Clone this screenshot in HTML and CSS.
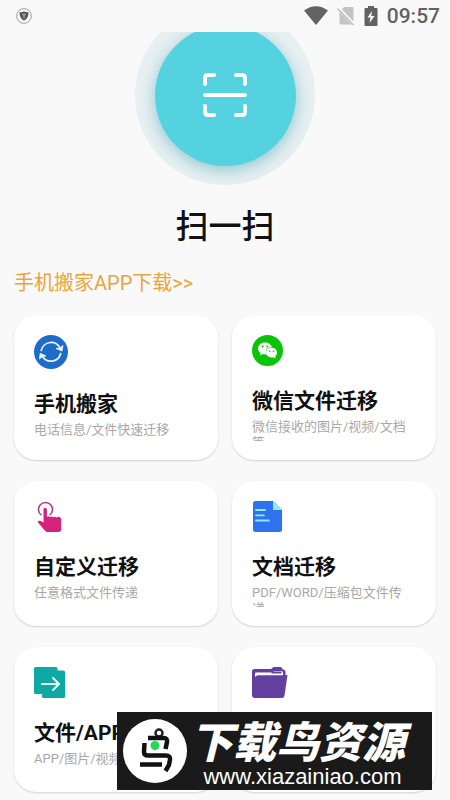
FILE: index.html
```html
<!DOCTYPE html>
<html lang="zh-CN">
<head>
<meta charset="utf-8">
<meta name="viewport" content="width=device-width, initial-scale=1">
<title>扫一扫</title>
<link rel="stylesheet" href="styles.css">
</head>
<body>
<header class="status">
  <svg class="status-shield" width="16" height="16" viewBox="0 0 16 16">
    <circle cx="8" cy="8" r="7.3" fill="#fff" stroke="#999" stroke-width="1"/>
    <path d="M8 3.2 Q10 4.4 12.5 4.2 Q12.8 10 8 12.8 Q3.200 10 3.500 4.200 Q6 4.400 8 3.200Z" fill="#555"/>
    <path d="M6.400 6.500 Q8 4.800 9.600 6.500 L8 8.200Z M8 8v2.500" fill="none" stroke="#ccc" stroke-width=".8"/>
  </svg>
  <div class="status-right">
    <svg width="24" height="20" viewBox="0 0 24 20"><path d="M0 4.500 Q12 -4 24 4.500 L12 19Z" fill="#626262"/></svg>
    <svg width="18" height="20" viewBox="0 0 18 20"><path d="M7 1h8.500q1 0 1 1v15.500q0 1-1 1H3.500q-1 0-1-1V5.500Z" fill="#c4c4c4"/><path d="M.5 1.500 17.500 19" stroke="#f9f9f9" stroke-width="3.500"/><path d="M.5 2.500 16.500 19" stroke="#bbb" stroke-width="1.500"/></svg>
    <svg width="14" height="20" viewBox="0 0 14 20"><path d="M4 0h6v2h2.500q1 0 1 1v16q0 1-1 1h-11q-1 0-1-1V3q0-1 1-1H4Z" fill="#626262"/><path d="M8 5 3.500 11.500h3L5.500 17l5-7H7.300Z" fill="#fff"/></svg>
    <span class="clock">09:57</span>
  </div>
</header>

<main class="content">
  <button class="scan" type="button" aria-labelledby="scan-title">
    <span class="scan-disc">
      <svg width="46" height="46" viewBox="0 0 46 46" fill="none" stroke="#fff" stroke-width="4" stroke-linecap="round" stroke-linejoin="round">
        <path d="M3 12V6q0-3 3-3h6M34 3h6q3 0 3 3v6M43 34v6q0 3-3 3h-6M12 43H6q-3 0-3-3v-6M3 23h40"/>
      </svg>
    </span>
  </button>
  <h1 class="scan-title" id="scan-title">扫一扫</h1>
  <a class="download" href="#">手机搬家APP下载&gt;&gt;</a>

  <nav class="grid">
    <a class="card" href="#">
      <svg width="34" height="34" viewBox="0 0 34 34">
        <circle cx="17" cy="17" r="17" fill="#1e6cc8"/>
        <g fill="none" stroke="#e8fbff" stroke-width="1.700" stroke-linecap="round"><path d="M7.300 15.500A10 10 0 0 1 26.300 13.500M26.700 18.500A10 10 0 0 1 8.500 21.500"/></g>
        <path d="M22 13.500 28 16 29 10.500 26 13Z M12 21 6.200 18.300 5.500 24 8.300 21.500Z" fill="#e8fbff" stroke="#e8fbff" stroke-width=".8" stroke-linejoin="round"/>
      </svg>
      <h2 class="card-title">手机搬家</h2>
      <p class="card-note">电话信息/文件快速迁移</p>
    </a>
    <a class="card" href="#">
      <svg width="31" height="31" viewBox="0 0 31 31">
        <circle cx="15.500" cy="15.500" r="15.500" fill="#09c409"/>
        <path d="M13 7.500C9 7.500 6 10.200 6 13.500c0 2 1 3.600 2.700 4.700L8 20.500l2.800-1.400q1.500.4 3 .3Q12.500 12.500 20 12C19 9.300 16.300 7.500 13 7.500Z" fill="#fff"/>
        <path d="M19.500 12.800c-3.200 0-5.600 2.100-5.600 4.800s2.400 4.900 5.600 4.900q1.200 0 2.200-.3l2 1.200-.5-2C24.300 20.500 25 19.200 25 17.600c0-2.700-2.300-4.800-5.500-4.800Z" fill="#fff"/>
        <g fill="#09c409"><circle cx="10.800" cy="11.500" r="1"/><circle cx="15.300" cy="11.500" r="1"/><circle cx="17.800" cy="16.300" r=".8"/><circle cx="21.400" cy="16.300" r=".8"/></g>
      </svg>
      <h2 class="card-title">微信文件迁移</h2>
      <p class="card-note">微信接收的图片/视频/文档等</p>
    </a>
    <a class="card" href="#">
      <svg width="31" height="31" viewBox="0 0 31 31">
        <path d="M7.500 14.200A7 7 0 1 1 15.500 14.200" fill="none" stroke="#b43a86" stroke-width="1.600"/>
        <path d="M9.500 8.500q0-1.700 1.700-1.700t1.700 1.700V16q1.500-1.500 3 0 2-1.200 3.300.2 2-1.200 3.300.2 2-1.400 3.500-.2 1.200.8 1.200 2.300V28q0 3-3 3H14q-2 0-3.200-1.500L4.500 22Q3.200 20 5 19.700q2.500-.2 4.500 2Z" fill="#d4227d"/>
      </svg>
      <h2 class="card-title">自定义迁移</h2>
      <p class="card-note">任意格式文件传递</p>
    </a>
    <a class="card" href="#">
      <svg width="31" height="31" viewBox="0 0 31 31">
        <path d="M3.500 0H21l9 9v19.500q0 2.500-2.500 2.500h-24Q1 31 1 28.500v-26Q1 0 3.500 0Z" fill="#2f72ed"/>
        <path d="M21 0l9 9h-9Z" fill="#8eeaff"/>
        <path d="M4 9h9M4 14.300h8M4 19.500h13" stroke="#8eeaff" stroke-width="1.800" stroke-linecap="round"/>
      </svg>
      <h2 class="card-title">文档迁移</h2>
      <p class="card-note">PDF/WORD/压缩包文件传递</p>
    </a>
    <a class="card" href="#">
      <svg width="31" height="31" viewBox="0 0 31 31">
        <path d="M1.500 0H22q1.500 0 1.500 1.500V3.500h6Q31 3.500 31 5v24.500q0 1.500-1.500 1.500H9.500Q8 31 8 29.500V27H1.500Q0 27 0 25.500v-24Q0 0 1.500 0Z" fill="#0ea9a3"/>
        <path d="M8 17h16.500M19 11l6 6-6 6" fill="none" stroke="#e5ffff" stroke-width="2" stroke-linecap="round" stroke-linejoin="round"/>
      </svg>
      <h2 class="card-title">文件/APP</h2>
      <p class="card-note">APP/图片/视频</p>
    </a>
    <a class="card" href="#">
      <svg width="36" height="31" viewBox="0 0 36 31">
        <path d="M2.500 2H19l2.500-2H29l2 2.500q2.500 0 2.500 2.500v3H35.500L32.500 28.500Q32 31 30 31H3q-3 0-3-3V4.500Q0 2 2.500 2Z" fill="#63409f"/>
        <path d="M3 10V6.500Q3 5.500 4.200 5.500H20L22.500 4H29.500q1.500 0 1.500 1.500V8.200H6Q4.200 8.200 3 10Z" fill="#fff"/>
        <path d="M21 4.500h8.500v2H19Z" fill="#63409f"/>
      </svg>
    </a>
  </nav>
</main>

<aside class="watermark">
  <svg width="64" height="64" viewBox="0 0 64 64">
    <circle cx="32" cy="32" r="32" fill="#fff"/>
    <circle cx="36" cy="14" r="3.500" fill="none" stroke="#222" stroke-width="2.500"/>
    <path d="M25 19H41q3.500 0 3 4L42.500 30" fill="none" stroke="#111" stroke-width="4.500"/>
    <path d="M21.500 24 21 33q0 3.500 4 3.500H43q4.500 0 4 4L46 46 42.500 52" fill="none" stroke="#111" stroke-width="4.500"/>
    <path d="M17 45.500H39" stroke="#111" stroke-width="4.500"/>
    <circle cx="32" cy="26.500" r="4.500" fill="#26d957"/>
  </svg>
  <div class="watermark-text">
    <strong class="watermark-name">下载鸟资源</strong>
    <span class="watermark-url">www.xiazainiao.com</span>
  </div>
</aside>
</body>
</html>
```
FILE: styles.css
```css
* {
  box-sizing: border-box;
}

body {
  margin: 0;
  background: #f9f9f9;
  color: #111;
  font-family: Roboto, "Noto Sans CJK SC", sans-serif;
}

svg {
  display: block;
  flex: none;
}

.status {
  display: flex;
  align-items: center;
  justify-content: space-between;
  height: 32px;
  padding: 0 10px 0 16px;
}

.status-right {
  display: flex;
  align-items: center;
  gap: 9px;
}

.clock {
  color: #626262;
  font-size: 21px;
  font-weight: 500;
  line-height: 24px;
}

.content {
  display: flex;
  flex-direction: column;
  overflow: hidden;
  padding: 0 14px 7px;
}

.scan {
  display: grid;
  place-items: center;
  align-self: center;
  width: 180px;
  height: 180px;
  margin-top: -27px;
  padding: 0;
  border: 0;
  border-radius: 50%;
  background: #e8f0f2;
  overflow: hidden;
}

.scan-disc {
  display: grid;
  place-items: center;
  width: 141px;
  height: 141px;
  border-radius: 50%;
  background: #55d2df;
  box-shadow: 0 4px 16px rgba(50, 160, 175, 0.5);
}

.scan-title {
  margin: 18px 0 19px;
  font-size: 33px;
  font-weight: 500;
  line-height: 48px;
  text-align: center;
}

.download {
  align-self: flex-start;
  color: #e9a43c;
  font-size: 20px;
  line-height: 26px;
  text-decoration: none;
}

.grid {
  display: grid;
  grid-template-columns: 1fr 1fr;
  grid-auto-rows: 145px;
  gap: 21px 14px;
  margin-top: 19px;
}

.card {
  min-width: 0;
  padding: 20px 24px 0 20px;
  border-radius: 22px;
  background: #fff;
  box-shadow: 0 1px 2px rgba(0, 0, 0, 0.16);
  color: inherit;
  text-decoration: none;
}

.card-title {
  margin: 21px 0 4px;
  font-size: 21px;
  font-weight: 700;
  line-height: 28px;
}

.card-note {
  max-height: 22px;
  margin: 0;
  overflow: hidden;
  color: #a8a8a8;
  font-size: 13px;
  line-height: 16px;
}

.watermark {
  position: fixed;
  right: 18px;
  bottom: 10px;
  display: flex;
  align-items: center;
  width: 315px;
  height: 78px;
  padding-left: 6px;
  background: #1a1a1a;
  color: #fff;
}

.watermark-text {
  display: flex;
  flex: 1;
  flex-direction: column;
  align-items: center;
  padding: 8px 14px 0 0;
  white-space: nowrap;
}

.watermark-name {
  margin-right: 10px;
  font-size: 43px;
  font-style: italic;
  font-weight: 900;
  line-height: 44px;
}

.watermark-url {
  font-family: "Liberation Sans", sans-serif;
  font-size: 22px;
  line-height: 24px;
}
```
